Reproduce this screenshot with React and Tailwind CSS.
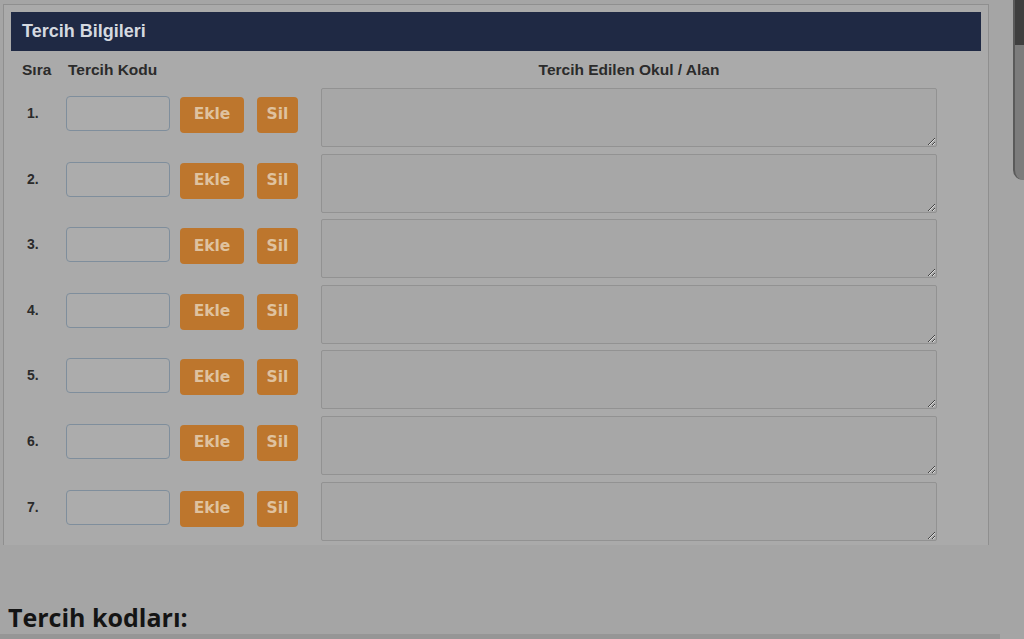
import React from "react";

const rows = [1, 2, 3, 4, 5, 6, 7];

const PrefRow = ({ n }) => (
    <div className="flex items-start h-[59px]">
        {/* sıra numarası */}
        <div className="w-[55px] pl-[16px] pt-[18px] text-[14px] font-bold text-[#2b2b2b] leading-none">
            {n}.
        </div>
        <input
            type="text"
            className="mt-[8px] w-[104px] h-[35px] rounded-[4px] border border-[#7f8e9c] bg-[#acacac] outline-none"
        />
        <button
            type="button"
            className="ml-[10px] mt-[9px] w-[64px] h-[36px] rounded-[4px] bg-[#bd762d] text-[#dfc29f] text-[15.5px] font-bold"
            style={{ fontFamily: '"DejaVu Sans", sans-serif' }}>
            Ekle
        </button>
        <button
            type="button"
            className="ml-[13px] mt-[9px] w-[41px] h-[36px] rounded-[4px] bg-[#bd762d] text-[#dfc29f] text-[15.5px] font-bold"
            style={{ fontFamily: '"DejaVu Sans", sans-serif' }}>
            Sil
        </button>
        <textarea
            className="ml-[23px] w-[616px] h-[59px] rounded-[2px] border border-[#929292] bg-[#a7a7a7] outline-none"
            readOnly
        />
    </div>
);

export default function App() {
    return (
        <div
            className="relative w-full h-[639px] overflow-hidden bg-[#a5a5a5] flex flex-col"
            style={{ fontFamily: '"Liberation Sans", Arial, sans-serif' }}>
            {/* Tercih paneli */}
            <div className="ml-[3px] mt-[4px] w-[986px] h-[541px] border border-b-0 border-[#8f8f8f] bg-[#aaaaaa] px-[7px] pt-[7px]">
                <div className="h-[39px] bg-[#1f2944] flex items-center pl-[11px]">
                    <span className="text-[18px] font-bold text-[#d5d9e0]">Tercih Bilgileri</span>
                </div>

                <div className="flex items-center h-[37px] text-[15.5px] font-bold text-[#2b2b2b]">
                    <span className="pl-[11px] w-[57px]">Sıra</span>
                    <span className="w-[253px]">Tercih Kodu</span>
                    <span className="w-[616px] text-center">Tercih Edilen Okul / Alan</span>
                </div>

                <div className="flex flex-col gap-[6.6px]">
                    {rows.map((n) => (
                        <PrefRow key={n} n={n} />
                    ))}
                </div>
            </div>

            <div className="mt-[60px] pl-[8px] text-[25px] font-bold leading-none text-[#141414]"
                style={{ fontFamily: '"Open Sans", "Noto Sans", sans-serif' }}>
                Tercih kodları:
            </div>
            <div className="mt-auto w-[1000px] h-[5px] bg-[#969696]" />

            {/* sağ kenardaki pencere parçası */}
            <div className="absolute right-0 top-0 w-[11px] h-[180px] rounded-bl-[10px] border-l-2 border-[#5a5a5a] bg-[#7c7c7c] overflow-hidden">
                <div className="h-[45px] bg-[#3f3f3f]" />
            </div>
        </div>
    );
}
